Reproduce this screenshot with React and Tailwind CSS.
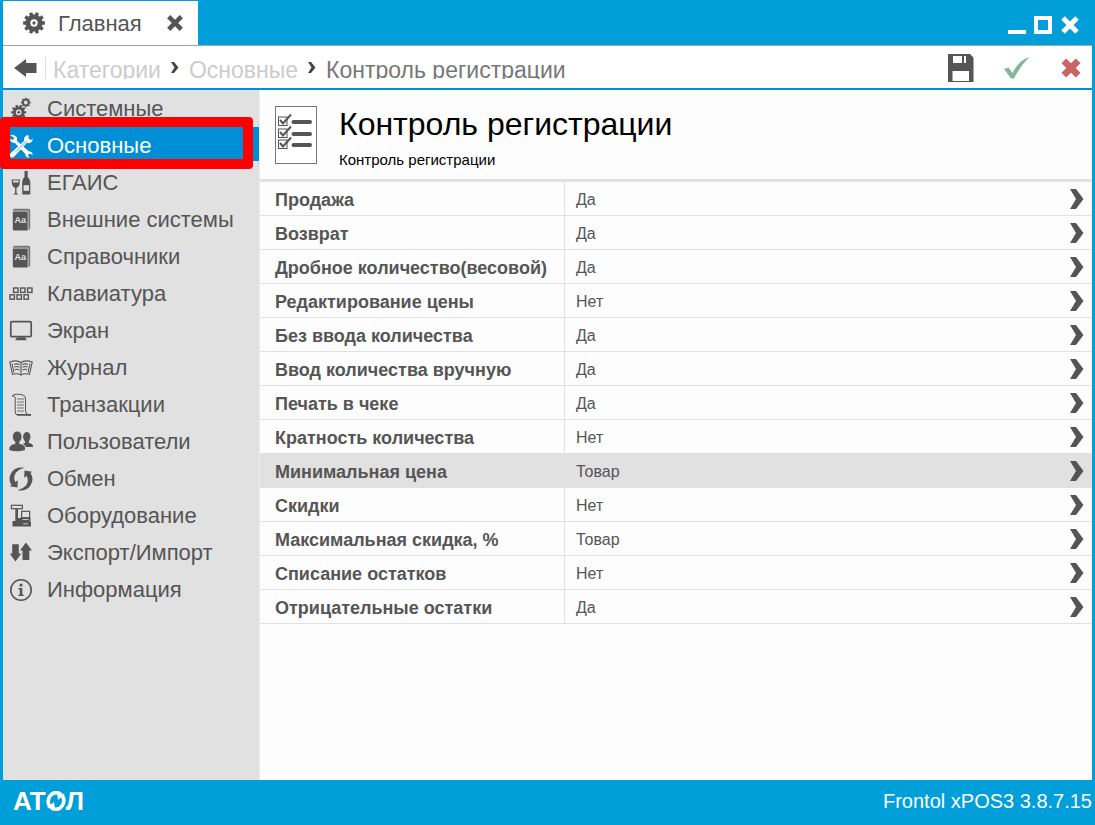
import clsx from 'clsx';

const gearPath = (cx, cy, outer, inner, teeth) => {
  const points = [];
  const step = (Math.PI * 2) / teeth;
  for (let i = 0; i < teeth; i++) {
    const a = i * step;
    [[-0.32, inner], [-0.24, outer], [0.24, outer], [0.32, inner]].forEach(([k, r]) => {
      points.push(`${(cx + r * Math.cos(a + k * step)).toFixed(2)} ${(cy + r * Math.sin(a + k * step)).toFixed(2)}`);
    });
  }
  return `M${points.join('L')}Z`;
};

const Gear = ({ cx, cy, outer, inner, hole, teeth = 8 }) => (
  <path
    fillRule="evenodd"
    d={`${gearPath(cx, cy, outer, inner, teeth)}M${cx - hole} ${cy}a${hole} ${hole} 0 1 0 ${hole * 2} 0a${hole} ${hole} 0 1 0 ${-hole * 2} 0Z`}
  />
);

const Icon = ({ children, className = 'size-6' }) => (
  <svg viewBox="0 0 24 24" fill="currentColor" className={clsx('shrink-0', className)} aria-hidden="true">
    {children}
  </svg>
);

const Cross = ({ className }) => (
  <svg viewBox="0 0 20 20" className={className} fill="none" stroke="currentColor" aria-hidden="true">
    <path d="M3 3L17 17M17 3L3 17" strokeWidth="5" />
  </svg>
);

const SystemIcon = () => (
  <Icon>
    <Gear cx={9.7} cy={15.3} outer={7.6} inner={5.8} hole={2.9} teeth={10} />
    <circle cx="9.7" cy="15.3" r="1.4" />
    <Gear cx={16.8} cy={5.5} outer={4.9} inner={3.8} hole={1.9} />
  </Icon>
);

const ToolsIcon = () => (
  <Icon>
    <path d="M17 1Q21 .4 19.2 4L22 6.2Q24 4.6 23.3 3.5Q24.6 8 20 9.2L18 8.8L4.8 23Q2.8 24.2 1.2 22.8Q0 21.2 1.3 19.6L15.2 6.7Q14.3 2.5 18.6 1Z" />
    <path d="M1 1Q5.5 0 8 3.6L8 7L20 17.5Q23.8 17.2 23.6 21.3L21.2 19.4L18.8 21L20.4 23.7Q16.2 23.4 16.2 19.7L6 9Q1.5 9 .8 5L3.4 6.1L5.4 4.1Z" />
    <path d="M7 17.5L17.5 7" stroke="#008fd6" strokeWidth=".7" />
  </Icon>
);

const WineIcon = () => (
  <Icon>
    <path d="M2.8 8.5H10.8Q11.3 16 7.5 16.8V22L9.7 23.4H3.9L6.1 22V16.8Q2.3 16 2.8 8.5Z" />
    <path d="M4 9.5H9.6V11.5H4Z" fill="#e1e1e1" />
    <path d="M15.5 0H18.7V6Q21.3 8 21.3 11V23.5H13.2V11Q13.2 8 15.5 6Z" />
    <path d="M14.6 14.2H20V19.8H14.6Z" fill="#e1e1e1" />
  </Icon>
);

const BookIcon = () => (
  <Icon>
    <path d="M5.5 .8H19.5Q21.2 .8 21.2 2.5V21.5H19.4V2.8H3.8Q4 1 5.5 .8Z" fill="#777" />
    <path d="M3.8 3.4H18.7V22.6H5.3Q3.8 22.6 3.8 21Z" />
    <text x="5.4" y="14.5" fontSize="9" fontWeight="bold" fill="#e1e1e1" fontFamily="Liberation Sans, sans-serif">Aa</text>
  </Icon>
);

const KeyboardIcon = () => (
  <Icon>
    <g fill="none" stroke="currentColor" strokeWidth="1.4">
      {[4.6, 11.6, 18.6].map((x) => <rect key={x} x={x} y="6" width="4.4" height="4.4" />)}
      {[1, 8, 15].map((x) => <rect key={x} x={x} y="12.8" width="4.4" height="4.4" />)}
    </g>
  </Icon>
);

const ScreenIcon = () => (
  <Icon>
    <rect x="1.8" y="2.6" width="20.4" height="15" rx="1" fill="none" stroke="currentColor" strokeWidth="1.7" />
    <path d="M8 18.2H16L17.8 21.2H6.2Z" />
  </Icon>
);

const JournalIcon = () => (
  <Icon>
    <g fill="none" stroke="currentColor" strokeWidth="1.1">
      <path d="M.8 6Q8 3.5 12 6.5Q16 3.5 23.2 6L20.5 18.3Q15 17 12 19Q9 17 3.5 18.3Z" />
      <path d="M12 6.5V18M3 7.5L5 16.5M21 7.5L19 16.5M5 8.3Q8 7.3 10.5 8.6M5.4 11Q8 10 10.5 11.3M5.8 13.7Q8 12.7 10.5 14M13.5 8.6Q16 7.3 19 8.3M13.5 11.3Q16 10 18.6 11M13.5 14Q16 12.7 18.2 13.7" />
    </g>
  </Icon>
);

const ScrollIcon = () => (
  <Icon>
    <g fill="none" stroke="currentColor" strokeWidth="1">
      <path d="M3 3Q6 0 14 2Q17 3 16.5 7V18Q17 22 22 22H9Q5.8 22 6.2 18V8Q7 2 3 3Z" />
      <path d="M8 6H15M8 9H15M8 12H15M8 15H15M8 18H15" strokeWidth=".8" />
      <path d="M8 21.8H22" strokeWidth="1.5" />
    </g>
  </Icon>
);

const UsersIcon = () => (
  <Icon>
    <ellipse cx="17.8" cy="6.8" rx="3.7" ry="4.8" />
    <path d="M16 10H19.5L20 13Q24.2 13.5 24 17H17L14 13.5L16 13Z" />
    <ellipse cx="8.2" cy="6.8" rx="4.8" ry="5.8" stroke="#e1e1e1" strokeWidth=".8" />
    <path d="M6.3 11H10.3V14Q17 14.5 16 20Q8 22.5 .2 20Q0 14.5 6.3 14Z" />
  </Icon>
);

const SyncIcon = () => (
  <Icon>
    <path d="M15.5 .8Q7-1 2.5 5.5Q-1.5 12 2.5 18L.8 19.2L8.5 20.5L8.8 13.2L6.3 15Q3.8 10 7 5.5Q10 2 15.5 .8Z" />
    <path d="M8.5 23.2Q17 25 21.5 18.5Q25.5 12 21.5 6L23.2 4.8L15.5 3.5L15.2 10.8L17.7 9Q20.2 14 17 18.5Q14 22 8.5 23.2Z" />
  </Icon>
);

const HardwareIcon = () => (
  <Icon>
    <rect x="2.4" y="1.3" width="11" height="3.4" fill="none" stroke="currentColor" strokeWidth="1.2" />
    <path d="M6.3 5H9V14H12L11 13.5H21.5V16.5L20.5 17.5H22V22.5H3.5V17H6.3Z" />
    <rect x="12.6" y="7.3" width="8" height="6.4" fill="#e1e1e1" stroke="currentColor" strokeWidth="1.2" />
    <path d="M13.5 15.5H19.5M14 19.8H19" stroke="#e1e1e1" strokeWidth=".8" />
  </Icon>
);

const TransferIcon = () => (
  <Icon>
    <path d="M3.2 3.2H9.8V12.5H12.4L6.4 20.5L.8 12.5H3.2Z" />
    <path d="M13.5 19H20.3V9.5H23L16.9 1.5L11 9.5H13.5Z" />
  </Icon>
);

const InfoIcon = () => (
  <Icon>
    <circle cx="12" cy="12" r="10.2" fill="none" stroke="currentColor" strokeWidth="1.6" />
    <path d="M10.6 5.8H13.4V8.4H10.6ZM9.5 10H13.3V16.5H14.6V18H9.5V16.5H10.8V11.5H9.5Z" />
  </Icon>
);

const MENU = [
  { label: 'Системные', icon: SystemIcon },
  { label: 'Основные', icon: ToolsIcon, active: true },
  { label: 'ЕГАИС', icon: WineIcon },
  { label: 'Внешние системы', icon: BookIcon },
  { label: 'Справочники', icon: BookIcon },
  { label: 'Клавиатура', icon: KeyboardIcon },
  { label: 'Экран', icon: ScreenIcon },
  { label: 'Журнал', icon: JournalIcon },
  { label: 'Транзакции', icon: ScrollIcon },
  { label: 'Пользователи', icon: UsersIcon },
  { label: 'Обмен', icon: SyncIcon },
  { label: 'Оборудование', icon: HardwareIcon },
  { label: 'Экспорт/Импорт', icon: TransferIcon },
  { label: 'Информация', icon: InfoIcon },
];

const SETTINGS = [
  ['Продажа', 'Да'],
  ['Возврат', 'Да'],
  ['Дробное количество(весовой)', 'Да'],
  ['Редактирование цены', 'Нет'],
  ['Без ввода количества', 'Да'],
  ['Ввод количества вручную', 'Да'],
  ['Печать в чеке', 'Да'],
  ['Кратность количества', 'Нет'],
  ['Минимальная цена', 'Товар'],
  ['Скидки', 'Нет'],
  ['Максимальная скидка, %', 'Товар'],
  ['Списание остатков', 'Нет'],
  ['Отрицательные остатки', 'Да'],
];

const SELECTED = 'Минимальная цена';

const TitleBar = () => (
  <header className="flex h-[45px] justify-between pt-px">
    <div className="flex w-[195px] items-center bg-white pl-5 text-[#555]">
      <Icon className="size-[22px]">
        <Gear cx={12} cy={12} outer={12} inner={9.4} hole={4} teeth={10} />
        <circle cx="12" cy="12" r="1.8" />
      </Icon>
      <span className="ml-[13px] text-[22px]">Главная</span>
      <button type="button" aria-label="Закрыть вкладку" className="ml-6">
        <Cross className="size-[18px]" />
      </button>
    </div>
    <div className="flex items-center gap-2 pr-3 pt-1 text-white">
      <button type="button" aria-label="Свернуть" className="flex h-[18px] w-[18px] items-end">
        <span className="h-1 w-full bg-white" />
      </button>
      <button type="button" aria-label="Развернуть" className="size-[18px] border-4 border-white" />
      <button type="button" aria-label="Закрыть">
        <Cross className="size-5" />
      </button>
    </div>
  </header>
);

const CrumbArrow = () => (
  <svg viewBox="0 0 8 12" className="mx-2.5 mt-[5px] h-3 w-2 shrink-0 self-start" fill="#444" aria-hidden="true">
    <path d="M0 0H3L7.5 5.5L3 11H0L3.5 5.5Z" />
  </svg>
);

const Toolbar = () => (
  <div className="flex h-[45px] items-center justify-between border-t border-[#a5a5a5] border-b-2 border-b-[#008fd6] bg-white pl-[11px] pr-2.5 pt-0.5">
    <div className="flex items-center">
      <button type="button" aria-label="Назад" className="mr-2 text-[#555]">
        <svg viewBox="0 0 23 18" className="h-[18px] w-[23px]" fill="currentColor" aria-hidden="true">
          <path d="M0 9L12 0V4H22.5V14H12V18Z" />
        </svg>
      </button>
      <nav className="flex h-[22px] items-start overflow-hidden border-l border-[#e1e1e1] pl-[7px] text-[23px] leading-[26px] text-[#ccc]">
        <a href="#categories">Категории</a>
        <CrumbArrow />
        <a href="#main">Основные</a>
        <CrumbArrow />
        <span className="text-[#777]">Контроль регистрации</span>
      </nav>
    </div>
    <div className="flex items-center gap-[30px]">
      <button type="button" aria-label="Сохранить" className="text-[#555]">
        <svg viewBox="0 0 26 28" className="h-7 w-[26px]" fill="currentColor" aria-hidden="true">
          <path fillRule="evenodd" d="M0 0H22L25.5 3.5V28H0ZM5 2V9H18V2ZM4.5 17V27H21V17Z" />
          <path d="M14 2H16V9H14Z" />
        </svg>
      </button>
      <button type="button" aria-label="Применить">
        <svg viewBox="0 0 26 22" className="h-[22px] w-[26px]" fill="#82b79b" aria-hidden="true">
          <path d="M0 12L4.5 10.5L8.5 16Q15 3 25.5 0Q16 9 10 21.5H7Z" />
        </svg>
      </button>
      <button type="button" aria-label="Отменить" className="text-[#ca6467]">
        <svg viewBox="0 0 20 20" className="size-[22px]" stroke="currentColor" strokeWidth="6" aria-hidden="true">
          <path d="M3.5 3.5L16.5 16.5M16.5 3.5L3.5 16.5" />
        </svg>
      </button>
    </div>
  </div>
);

const Sidebar = () => (
  <nav className="w-[257px] shrink-0 border-r border-[#ececec] bg-[#e1e1e1]">
    <ul className="flex flex-col gap-[3px]">
      {MENU.map(({ label, icon: MenuIcon, active }) => (
        <li key={label} className="relative">
          <a
            href="#menu"
            className={clsx(
              'flex h-[34px] items-center gap-3.5 pl-1.5 pt-1 text-[22px] leading-none',
              active ? 'bg-[#008fd6] text-white' : 'text-[#555]'
            )}
          >
            <MenuIcon />
            <span>{label}</span>
          </a>
          {active && (
            <span className="pointer-events-none absolute -left-[3px] -top-2.5 z-10 h-[52px] w-[253px] rounded border-[10px] border-[#f00]" />
          )}
        </li>
      ))}
    </ul>
  </nav>
);

const ChecklistIcon = () => (
  <svg viewBox="0 0 42 58" className="h-[58px] w-[42px] shrink-0" fill="none" aria-hidden="true">
    <rect x=".5" y=".5" width="41" height="57" fill="#fff" stroke="#777" />
    {[11, 23, 34].map((y) => (
      <g key={y} stroke="#555">
        <rect x="3.5" y={y} width="8.5" height="8.5" strokeWidth="1" />
        <path d={`M5 ${y + 3}L8 ${y + 6.5}L16 ${y - 2.5}`} strokeWidth="2" />
        <path d={`M18.5 ${y + 5}H35`} strokeWidth="4" strokeLinecap="round" />
      </g>
    ))}
  </svg>
);

const Settings = () => (
  <main className="min-w-0 flex-1 bg-[#fdfdfd]">
    <div className="flex h-[92px] items-start gap-[22px] border-b-[3px] border-[#e1e1e1] pl-[15px] pt-4">
      <ChecklistIcon />
      <div>
        <h1 className="text-[32px] leading-9 text-black">Контроль регистрации</h1>
        <p className="mt-2 text-[15px] leading-5 text-black">Контроль регистрации</p>
      </div>
    </div>
    <table className="w-full table-fixed border-separate border-spacing-0 text-left text-[#555]">
      <tbody>
        {SETTINGS.map(([name, value]) => (
          <tr key={name} className={clsx('h-[34px]', name === SELECTED && 'bg-[#e1e1e1]')}>
            <th scope="row" className="w-[305px] whitespace-nowrap border-b border-r border-[#e1e1e1] pl-[15px] pt-0.5 text-lg leading-6">
              {name}
            </th>
            <td className="border-b border-[#e1e1e1] pl-[11px] pt-0.5 text-base">{value}</td>
            <td className="w-12 border-b border-[#e1e1e1] pr-2">
              <button type="button" aria-label={name} className="ml-auto block">
                <svg viewBox="0 0 14 20" className="h-5 w-3.5" fill="#555" aria-hidden="true">
                  <path d="M0 0H6L13.5 10L6 20H0L6 10Z" />
                </svg>
              </button>
            </td>
          </tr>
        ))}
      </tbody>
    </table>
  </main>
);

const Logo = () => (
  <div className="flex items-center text-[26px] font-bold leading-none" aria-label="АТОЛ">
    <span>AT</span>
    <svg viewBox="0 0 20 20" className="size-5" fill="none" stroke="currentColor" aria-hidden="true">
      <path d="M15 3Q8-.5 4 5Q.5 10 3.5 15" strokeWidth="3.6" />
      <path d="M5 17Q12 20.5 16 15Q19.5 10 16.5 5" strokeWidth="3.6" />
      <path d="M1 17L9 18L8 11ZM19 3L11 2L12 9Z" fill="currentColor" stroke="none" />
    </svg>
    <span>Л</span>
  </div>
);

const App = () => (
  <div className="flex min-h-screen flex-col bg-[#009fd9] px-[3px] font-['Liberation_Sans',Arial,sans-serif]">
    <TitleBar />
    <Toolbar />
    <div className="flex flex-1">
      <Sidebar />
      <Settings />
    </div>
    <footer className="flex h-[45px] items-center justify-between pb-1 pl-2.5 text-white">
      <Logo />
      <span className="text-xl">Frontol xPOS3 3.8.7.15</span>
    </footer>
  </div>
);

export default App;
